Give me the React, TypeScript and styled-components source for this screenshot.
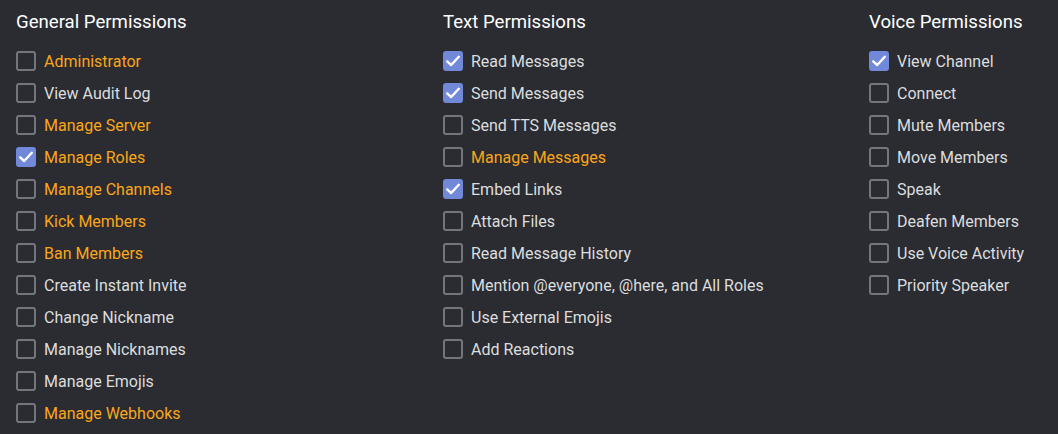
import React from "react";
import styled, { createGlobalStyle } from "styled-components";

const GlobalStyle = createGlobalStyle`
  html, body {
    margin: 0;
    padding: 0;
    background: #2a2c31;
    font-family: Roboto, "Noto Sans", "Liberation Sans", sans-serif;
  }
`;

const Page = styled.div`
  display: grid;
  grid-template-columns: 427px 426px 1fr;
  padding: 11px 16px 0;
  height: 434px;
  box-sizing: border-box;
  overflow: hidden;
`;

const Column = styled.div`
  display: flex;
  flex-direction: column;
`;

const Title = styled.h3`
  margin: 0 0 12px;
  font-size: 18.6px;
  font-weight: 400;
  line-height: 22px;
  color: #ffffff;
`;

const Row = styled.label`
  display: flex;
  align-items: center;
  gap: 8px;
  height: 32px;
  cursor: pointer;
`;

const Box = styled.span<{ $checked?: boolean }>`
  width: 20px;
  height: 20px;
  box-sizing: border-box;
  border-radius: 3px;
  border: 2px solid ${(p) => (p.$checked ? "#7289da" : "#72767d")};
  background: ${(p) => (p.$checked ? "#7289da" : "transparent")};
  display: flex;
  align-items: center;
  justify-content: center;
  flex-shrink: 0;
`;

const Name = styled.span<{ $elevated?: boolean }>`
  font-size: 16px;
  color: ${(p) => (p.$elevated ? "#faa61a" : "#dcddde")};
`;

type Perm = { name: string; checked?: boolean; elevated?: boolean };

const groups: { title: string; perms: Perm[] }[] = [
  {
    title: "General Permissions",
    perms: [
      { name: "Administrator", elevated: true },
      { name: "View Audit Log" },
      { name: "Manage Server", elevated: true },
      { name: "Manage Roles", elevated: true, checked: true },
      { name: "Manage Channels", elevated: true },
      { name: "Kick Members", elevated: true },
      { name: "Ban Members", elevated: true },
      { name: "Create Instant Invite" },
      { name: "Change Nickname" },
      { name: "Manage Nicknames" },
      { name: "Manage Emojis" },
      { name: "Manage Webhooks", elevated: true },
    ],
  },
  {
    title: "Text Permissions",
    perms: [
      { name: "Read Messages", checked: true },
      { name: "Send Messages", checked: true },
      { name: "Send TTS Messages" },
      { name: "Manage Messages", elevated: true },
      { name: "Embed Links", checked: true },
      { name: "Attach Files" },
      { name: "Read Message History" },
      { name: "Mention @everyone, @here, and All Roles" },
      { name: "Use External Emojis" },
      { name: "Add Reactions" },
    ],
  },
  {
    title: "Voice Permissions",
    perms: [
      { name: "View Channel", checked: true },
      { name: "Connect" },
      { name: "Mute Members" },
      { name: "Move Members" },
      { name: "Speak" },
      { name: "Deafen Members" },
      { name: "Use Voice Activity" },
      { name: "Priority Speaker" },
    ],
  },
];

const Check = () => (
  <svg width="16" height="16" viewBox="0 0 16 16">
    <path
      d="M2.2 8.4 L6.2 12 L13.8 3.8"
      fill="none"
      stroke="#ffffff"
      strokeWidth="2.4"
      strokeLinecap="round"
      strokeLinejoin="round"
    />
  </svg>
);

const App: React.FC = () => (
  <>
    <GlobalStyle />
    <Page>
      {groups.map((g) => (
        <Column key={g.title}>
          <Title>{g.title}</Title>
          {g.perms.map((p) => (
            <Row key={p.name}>
              <Box $checked={p.checked}>{p.checked && <Check />}</Box>
              <Name $elevated={p.elevated}>{p.name}</Name>
            </Row>
          ))}
        </Column>
      ))}
    </Page>
  </>
);

export default App;
